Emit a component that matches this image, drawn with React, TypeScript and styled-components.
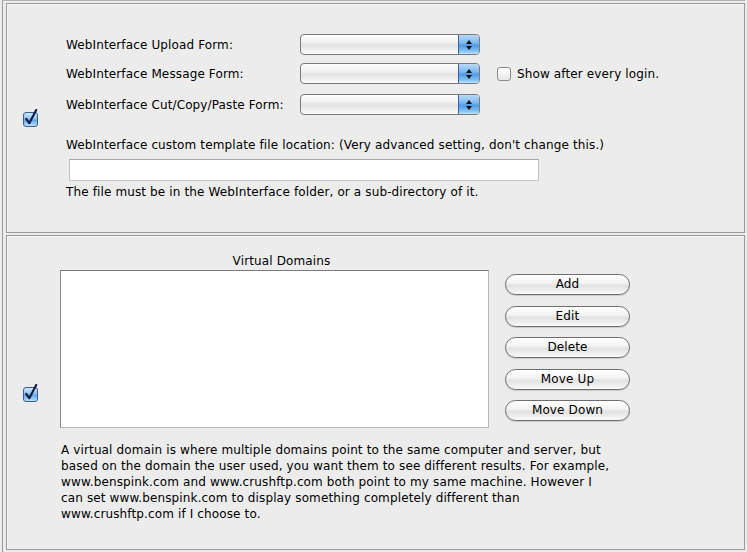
import React from "react";
import styled, { createGlobalStyle } from "styled-components";

const GlobalStyle = createGlobalStyle`
  html, body {
    margin: 0;
    padding: 0;
    background: #ececec;
  }
  body {
    font-family: "DejaVu Sans", "Liberation Sans", sans-serif;
    font-size: 12px;
    letter-spacing: 0.13px;
    color: #000;
  }
`;

const Frame = styled.div`
  margin-left: 2px;
  width: 743px;
  height: 552px;
  box-sizing: border-box;
  border-left: 1px solid #9c9c9c;
  border-top: 1px solid #b4b4b4;
  padding: 2px 0 0 3px;
  overflow: hidden;
`;

const Panel = styled.div<{ height: number }>`
  box-sizing: border-box;
  width: 739px;
  height: ${(p) => p.height}px;
  border: 1px solid #9a9a9a;
  box-shadow: inset 1px 1px 0 #f6f6f6;
  margin-bottom: 2px;
  display: flex;
  align-items: flex-start;
  padding-left: 16px;
`;

const CheckCol = styled.div`
  align-self: center;
  width: 16px;
  height: 18px;
  display: flex;
`;

const Content = styled.div<{ top: number; left: number }>`
  padding-top: ${(p) => p.top}px;
  margin-left: ${(p) => p.left}px;
  display: flex;
  flex-direction: column;
`;

const FormRow = styled.div<{ gap: number }>`
  display: flex;
  align-items: center;
  height: 21px;
  margin-bottom: ${(p) => p.gap}px;
`;

const Label = styled.div`
  width: 234px;
  white-space: nowrap;
`;

const Select = styled.div`
  box-sizing: border-box;
  width: 180px;
  height: 21px;
  border: 1px solid #7a7a7a;
  border-radius: 4px;
  background: linear-gradient(#fdfdfd 0%, #f2f2f2 35%, #e3e3e3 55%, #f0f0f0 80%, #fbfbfb 100%);
  overflow: hidden;
  display: flex;
  justify-content: flex-end;
`;

const SelectArrow = styled.div`
  width: 20px;
  height: 100%;
  border-left: 1px solid #3d5f9c;
  background: linear-gradient(#b9daf9 0%, #7fb9ef 40%, #4f9ae6 55%, #83c2f5 85%, #bfe4ff 100%);
  display: flex;
  align-items: center;
  justify-content: center;
`;

const SmallCheck = styled.div`
  box-sizing: border-box;
  width: 14px;
  height: 14px;
  margin-left: 17px;
  margin-right: 6px;
  border: 1px solid #8a8a8a;
  border-radius: 3px;
  background: linear-gradient(#ffffff, #e6e6e6);
`;

const Text = styled.div<{ mt?: number }>`
  line-height: 16px;
  margin-top: ${(p) => p.mt || 0}px;
  white-space: nowrap;
`;

const TextInput = styled.div`
  box-sizing: border-box;
  margin-left: 3px;
  margin-top: 6px;
  width: 470px;
  height: 22px;
  background: #fff;
  border: 1px solid #c4c4c4;
  border-top-color: #a8a8a8;
`;

const ListArea = styled.div`
  display: flex;
  flex-direction: column;
`;

const ListTitle = styled.div`
  text-align: center;
  line-height: 16px;
  padding-left: 14px;
  height: 17px;
`;

const DomainRow = styled.div`
  display: flex;
  align-items: flex-start;
`;

const ListBox = styled.div`
  box-sizing: border-box;
  width: 429px;
  height: 158px;
  background: #fff;
  border: 1px solid #b8b8b8;
  border-top-color: #7c7c7c;
  border-left-color: #8a8a8a;
`;

const Buttons = styled.div`
  margin-left: 16px;
  padding-top: 21px;
  display: flex;
  flex-direction: column;
  gap: 10.6px;
`;

const Button = styled.div`
  box-sizing: border-box;
  width: 125px;
  height: 21px;
  border: 1px solid #6e6e6e;
  border-radius: 11px;
  background: linear-gradient(#ffffff 0%, #f4f4f4 40%, #e2e2e2 55%, #eeeeee 80%, #fafafa 100%);
  box-shadow: 0 1px 1px rgba(0, 0, 0, 0.15);
  display: flex;
  align-items: center;
  justify-content: center;
  line-height: 19px;
`;

const Description = styled.div`
  margin-top: 14px;
  margin-left: 1px;
  line-height: 16px;
  white-space: nowrap;
`;

const Checkbox = () => (
  <svg width="16" height="18" viewBox="0 0 16 18">
    <defs>
      <linearGradient id="cbg" x1="0" y1="0" x2="0" y2="1">
        <stop offset="0" stopColor="#d6ebfd" />
        <stop offset="0.45" stopColor="#8cc1f1" />
        <stop offset="0.55" stopColor="#5ca5e9" />
        <stop offset="1" stopColor="#c4e6ff" />
      </linearGradient>
    </defs>
    <rect x="0.5" y="3.5" width="14" height="14" rx="2.5" fill="url(#cbg)" stroke="#3a5d96" />
    <path d="M3.2 9.8 L6.3 14.2 L13.2 1" fill="none" stroke="#0e1c44" strokeWidth="2.1" strokeLinejoin="round" strokeLinecap="round" />
  </svg>
);

const Arrows = () => (
  <svg width="8" height="12" viewBox="0 0 8 12">
    <path d="M4 1 L7 5 L1 5 Z" fill="#111" />
    <path d="M1 7 L7 7 L4 11 Z" fill="#111" />
  </svg>
);

const App: React.FC = () => {
  return (
    <>
      <GlobalStyle />
      <Frame>
        <Panel height={230}>
          <CheckCol>
            <Checkbox />
          </CheckCol>
          <Content top={30} left={27}>
            <FormRow gap={8}>
              <Label>WebInterface Upload Form:</Label>
              <Select>
                <SelectArrow>
                  <Arrows />
                </SelectArrow>
              </Select>
            </FormRow>
            <FormRow gap={10}>
              <Label>WebInterface Message Form:</Label>
              <Select>
                <SelectArrow>
                  <Arrows />
                </SelectArrow>
              </Select>
              <SmallCheck />
              <span>Show after every login.</span>
            </FormRow>
            <FormRow gap={0}>
              <Label>WebInterface Cut/Copy/Paste Form:</Label>
              <Select>
                <SelectArrow>
                  <Arrows />
                </SelectArrow>
              </Select>
            </FormRow>
            <Text mt={22}>
              WebInterface custom template file location: (Very advanced setting, don't change this.)
            </Text>
            <TextInput />
            <Text mt={3}>The file must be in the WebInterface folder, or a sub-directory of it.</Text>
          </Content>
        </Panel>
        <Panel height={315}>
          <CheckCol>
            <Checkbox />
          </CheckCol>
          <Content top={17} left={21}>
            <DomainRow>
              <ListArea>
                <ListTitle>Virtual Domains</ListTitle>
                <ListBox />
              </ListArea>
              <Buttons>
                <Button>Add</Button>
                <Button>Edit</Button>
                <Button>Delete</Button>
                <Button>Move Up</Button>
                <Button>Move Down</Button>
              </Buttons>
            </DomainRow>
            <Description>
              A virtual domain is where multiple domains point to the same computer and server, but
              <br />
              based on the domain the user used, you want them to see different results. For example,
              <br />
              www.benspink.com and www.crushftp.com both point to my same machine. However I
              <br />
              can set www.benspink.com to display something completely different than
              <br />
              www.crushftp.com if I choose to.
            </Description>
          </Content>
        </Panel>
      </Frame>
    </>
  );
};

export default App;
